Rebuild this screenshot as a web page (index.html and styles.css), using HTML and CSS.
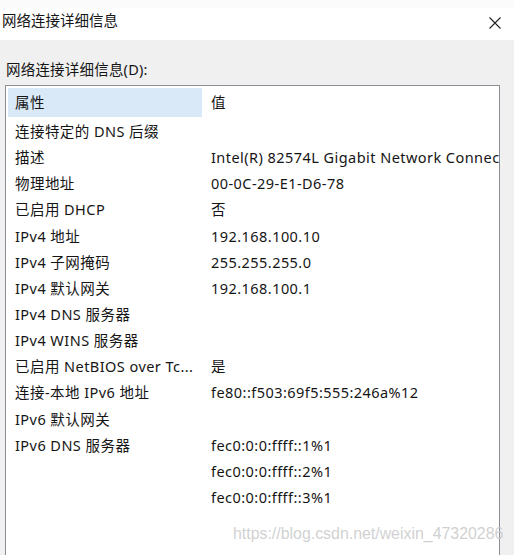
FILE: index.html
```html
<!DOCTYPE html>
<html lang="zh-CN">
<head>
<meta charset="utf-8">
<title>网络连接详细信息</title>
<link rel="stylesheet" href="styles.css">
</head>
<body>
<div class="window">
  <div class="topstrip"></div>
  <div class="titlebar">
    <span class="title">网络连接详细信息</span>
    <svg class="close" width="12" height="12" viewBox="0 0 12 12"><path d="M0.5 0.5 L11.5 11.5 M11.5 0.5 L0.5 11.5" stroke="#222" stroke-width="1.1" fill="none"/></svg>
  </div>
  <div class="content">
    <div class="label">网络连接详细信息(D):</div>
    <div class="listbox">
      <div class="grid">
        <div class="hdr hdr-prop">属性</div><div class="hdr hdr-val">值</div>
        <div class="k">连接特定的 DNS 后缀</div><div class="v"></div>
        <div class="k">描述</div><div class="v">Intel(R) 82574L Gigabit Network Connection</div>
        <div class="k">物理地址</div><div class="v">00-0C-29-E1-D6-78</div>
        <div class="k">已启用 DHCP</div><div class="v">否</div>
        <div class="k">IPv4 地址</div><div class="v">192.168.100.10</div>
        <div class="k">IPv4 子网掩码</div><div class="v">255.255.255.0</div>
        <div class="k">IPv4 默认网关</div><div class="v">192.168.100.1</div>
        <div class="k">IPv4 DNS 服务器</div><div class="v"></div>
        <div class="k">IPv4 WINS 服务器</div><div class="v"></div>
        <div class="k">已启用 NetBIOS over Tc...</div><div class="v">是</div>
        <div class="k">连接-本地 IPv6 地址</div><div class="v">fe80::f503:69f5:555:246a%12</div>
        <div class="k">IPv6 默认网关</div><div class="v"></div>
        <div class="k">IPv6 DNS 服务器</div><div class="v">fec0:0:0:ffff::1%1</div>
        <div class="k"></div><div class="v">fec0:0:0:ffff::2%1</div>
        <div class="k"></div><div class="v">fec0:0:0:ffff::3%1</div>
      </div>
    </div>
  </div>
  <div class="watermark">https://blog.csdn.net/weixin_47320286</div>
</div>
</body>
</html>
```

FILE: styles.css
```css
html, body {
  margin: 0;
  padding: 0;
}
body {
  width: 514px;
  height: 555px;
  overflow: hidden;
  background: #f0f0f0;
  font-family: "Noto Sans", "Noto Sans CJK SC", sans-serif;
  font-size: 14.5px;
  color: #151515;
}
.window {
  position: relative;
  width: 514px;
  height: 555px;
  overflow: hidden;
}
.topstrip {
  height: 8px;
  background: #fbfbfb;
}
.titlebar {
  height: 32px;
  background: #ffffff;
  display: flex;
  align-items: flex-start;
  justify-content: space-between;
  padding: 3px 13px 0 2px;
  box-sizing: border-box;
}
.title {
  line-height: 18px;
}
.close {
  margin-top: 6px;
}
.content {
  padding: 20px 14px 0 5px;
}
.label {
  line-height: 18px;
  padding-left: 1px;
  height: 25px;
  letter-spacing: 0.2px;
}
.listbox {
  background: #ffffff;
  border: 1px solid #8a8f96;
  height: 480px;
  padding: 2px 0 0 2px;
  box-sizing: border-box;
  overflow: hidden;
}
.grid {
  display: grid;
  grid-template-columns: 194px 1fr;
  grid-template-rows: 29px;
  grid-auto-rows: 26.15px;
  letter-spacing: 0.45px;
}
.grid > div {
  white-space: nowrap;
  overflow: hidden;
  line-height: 28px;
}
.grid > .hdr {
  line-height: 29px;
}
.hdr-prop {
  background: #d9e9f8;
  padding-left: 7px;
}
.hdr-val {
  padding-left: 9px;
}
.k {
  padding-left: 7px;
}
.v {
  padding-left: 9px;
}
.watermark {
  position: absolute;
  left: 233px;
  top: 525px;
  font-family: "Liberation Sans", Arial, sans-serif;
  font-size: 15.9px;
  color: rgba(200, 200, 200, 0.85);
  white-space: nowrap;
}
```
